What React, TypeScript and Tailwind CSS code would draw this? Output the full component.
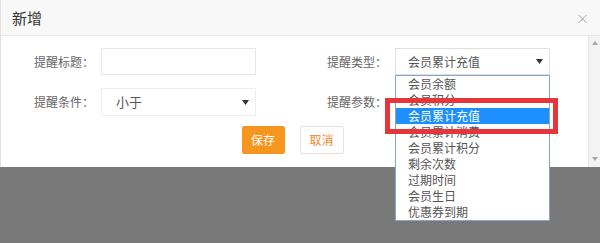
import React from "react";

const font = { fontFamily: '"Noto Sans CJK SC", "Noto Sans", sans-serif' };

function Arrow() {
  return (
    <svg width="7" height="5" viewBox="0 0 7 5" className="shrink-0">
      <path d="M0 0 L7 0 L3.5 5 Z" fill="#333" />
    </svg>
  );
}

const items = [
  "会员余额",
  "会员积分",
  "会员累计充值",
  "会员累计消费",
  "会员累计积分",
  "剩余次数",
  "过期时间",
  "会员生日",
  "优惠券到期",
];

export default function App() {
  return (
    <div
      className="relative w-[600px] h-[243px] bg-[#797979] overflow-hidden"
      style={font}
    >
      <div className="flex flex-col h-[167px] bg-white border-l border-[#e2e2e2]">
        <div className="flex items-center justify-between h-[36px] shrink-0 bg-[#f8f8f8] border-b border-[#e8e8e8] pl-[11px] pr-[11px]">
          <span className="text-[15px] text-[#333] leading-none">新增</span>
          <span className="text-[13px] text-[#b0b0b0] leading-none">×</span>
        </div>
        <div className="flex flex-1 min-h-0">
          <div className="flex-1 flex flex-col pt-[12px]">
            <div className="flex items-center h-[27px]">
              <div className="w-[67px] ml-[33px] text-[12px] text-[#666]">提醒标题：</div>
              <div className="w-[155px] h-[27px] border border-[#e8e8e8] bg-white" />
              <div className="w-[68px] ml-[71px] text-[12px] text-[#666]">提醒类型：</div>
              <div className="w-[155px] h-[27px] border border-[#e0e0e0] bg-white flex items-center justify-between pl-[12px] pr-[6px] text-[12px] text-[#555]">
                <span>会员累计充值</span>
                <Arrow />
              </div>
            </div>
            <div className="flex items-center h-[28px] mt-[13px]">
              <div className="w-[67px] ml-[33px] text-[12px] text-[#666]">提醒条件：</div>
              <div className="w-[155px] h-[28px] border border-[#eeeeee] bg-white flex items-center justify-between pl-[14px] pr-[6px] text-[13px] text-[#555]">
                <span>小于</span>
                <Arrow />
              </div>
              <div className="w-[68px] ml-[71px] text-[12px] text-[#666]">提醒参数：</div>
            </div>
            <div className="flex justify-center gap-[15px] mt-[10px] pr-[4px]">
              <button className="w-[43px] h-[28px] bg-[#f7961f] text-white text-[12px] rounded-[2px]">
                保存
              </button>
              <button className="w-[44px] h-[28px] bg-white border border-[#e4e4e4] text-[#f0862a] text-[12px] rounded-[2px]">
                取消
              </button>
            </div>
          </div>
          <div className="w-[12px] bg-[#f3f3f3] border-l border-[#e6e6e6] flex flex-col items-center justify-between pt-[5px] pb-[6px]">
            <svg width="6" height="4" viewBox="0 0 6 4">
              <path d="M0 4 L6 4 L3 0 Z" fill="#a8a8a8" />
            </svg>
            <svg width="6" height="4" viewBox="0 0 6 4">
              <path d="M0 0 L6 0 L3 4 Z" fill="#a8a8a8" />
            </svg>
          </div>
        </div>
      </div>

      <div className="absolute left-[395px] top-[75px] w-[155px] bg-white border border-[#8aa4c8] flex flex-col">
        {items.map((t, i) => (
          <div
            key={t}
            className={
              i === 2
                ? "h-[16px] leading-[16px] pl-[12px] text-[12px] bg-[#1e8fff] text-white"
                : "h-[16px] leading-[16px] pl-[12px] text-[12px] text-[#555]"
            }
          >
            {t}
          </div>
        ))}
      </div>

      <div className="absolute left-[385px] top-[98px] w-[173px] h-[36px] border-[5px] border-[#e8353a]" />
    </div>
  );
}
